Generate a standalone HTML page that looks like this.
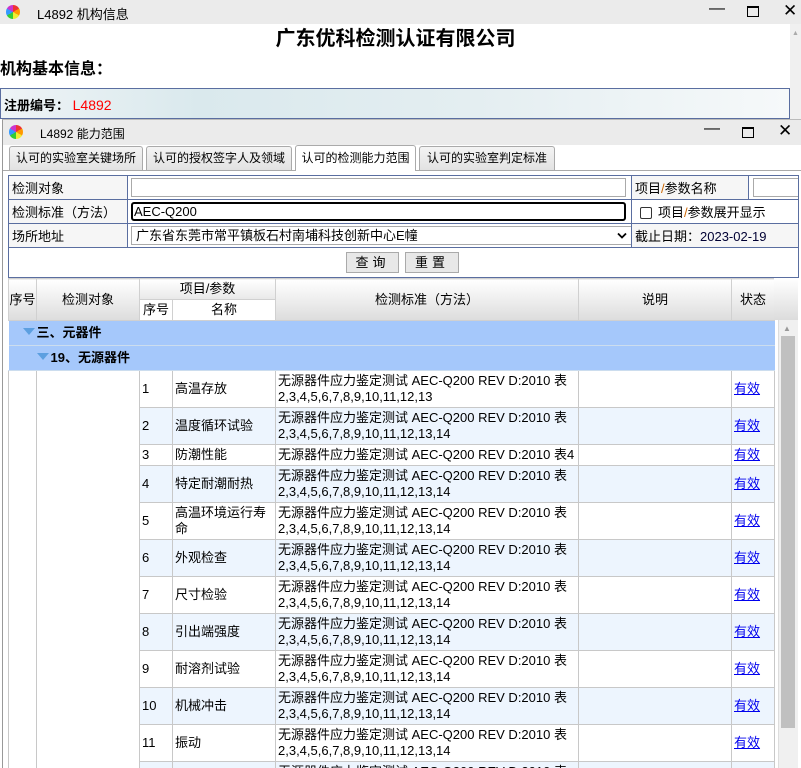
<!DOCTYPE html>
<html><head><meta charset="utf-8"><style>
*{box-sizing:border-box;margin:0;padding:0}
body{width:801px;height:768px;overflow:hidden;background:#fff;font-family:"Liberation Sans","Noto Sans CJK SC",sans-serif;font-size:12px;color:#000;position:relative}
.abs{position:absolute}
.tb{background:#ebebeb}
.logo{width:14px;height:14px;border-radius:50%;background:conic-gradient(#e33 0 60deg,#f90 60deg 120deg,#ee3 120deg 180deg,#3c3 180deg 240deg,#39f 240deg 300deg,#c3c 300deg 360deg)}
table{border-collapse:collapse;table-layout:fixed}
.form td{border:1px solid #5a6ea0;height:24px;padding:0 3px;font-size:13px;white-space:nowrap;overflow:hidden}
.inp{border:1px solid #aaa;height:19px;background:#fff}
.grid td{border:1px solid #c8c8c8;padding:1px 2px;line-height:16px;font-size:13px;vertical-align:middle}
.grid tr.a td.d{background:#edf5fe}
.hd td{background:linear-gradient(#fff,#dcdcdc);text-align:center;border:1px solid #d0d0d0;white-space:nowrap;padding:0!important}
a{color:#00e;text-decoration:underline}
.grp td{background:#a5c8fb;border:none;border-bottom:1px solid #cde;font-weight:bold;height:25px;font-size:13px}
.tri{display:inline-block;width:0;height:0;border-left:6px solid transparent;border-right:6px solid transparent;border-top:7px solid #5c9fe0;margin-right:2px;vertical-align:2px}
.btn{position:absolute;top:252px;height:21px;border:1px solid #aaa;background:#e8e8e8;font-size:13px;text-align:center;line-height:19px;letter-spacing:4px}
</style></head><body>
<div class="abs tb" style="left:0;top:0;width:801px;height:24px"></div>
<div class="abs logo" style="left:6px;top:5px"></div>
<div class="abs" style="left:37px;top:4px;font-size:13px">L4892 机构信息</div>
<div class="abs" style="left:709px;top:0;font-size:16px">—</div>
<div class="abs" style="left:747px;top:6px;width:12px;height:11px;border:1px solid #000;border-top-width:2px"></div>
<div class="abs" style="left:783px;top:1px;font-size:17px">✕</div>
<div class="abs" style="left:790px;top:24px;width:11px;height:96px;background:#f0f0f0"></div>
<div class="abs" style="left:792px;top:30px;font-size:7px;color:#aaa">▲</div>
<div class="abs" style="left:0;top:24px;width:801px;text-align:center;font-size:20px;font-weight:bold;line-height:30px;padding-right:10px">广东优科检测认证有限公司</div>
<div class="abs" style="left:0;top:58px;font-size:16px;font-weight:bold;line-height:24px">机构基本信息：</div>
<div class="abs" style="left:0;top:88px;width:790px;height:31px;border:1px solid #5a6ea0;background:linear-gradient(90deg,#eef4f6,#dae9ed 25%,#e4eef1 60%,#f6f9fa);padding:6px 3px;font-size:13px;font-weight:bold">注册编号： <span style="color:#f00;font-weight:normal;font-size:14px">L4892</span></div>
<div class="abs" style="left:2px;top:119px;width:799px;height:649px;background:#fff;border-left:1px solid #999;border-top:1px solid #bbb"></div>
<div class="abs tb" style="left:3px;top:120px;width:798px;height:25px"></div>
<div class="abs logo" style="left:9px;top:125px"></div>
<div class="abs" style="left:40px;top:125px;font-size:12px">L4892 能力范围</div>
<div class="abs" style="left:704px;top:120px;font-size:16px">—</div>
<div class="abs" style="left:742px;top:127px;width:12px;height:11px;border:1px solid #000;border-top-width:2px"></div>
<div class="abs" style="left:778px;top:121px;font-size:17px">✕</div>
<div class="abs" style="left:3px;top:170px;width:798px;border-top:1px solid #aaa"></div>
<div class="abs" style="left:9px;top:146px;width:134px;height:24px;border:1px solid #aaa;border-bottom:none;border-radius:3px 3px 0 0;background:linear-gradient(#f4f4f4,#e2e2e2);text-align:center;line-height:23px">认可的实验室关键场所</div>
<div class="abs" style="left:146px;top:146px;width:146px;height:24px;border:1px solid #aaa;border-bottom:none;border-radius:3px 3px 0 0;background:linear-gradient(#f4f4f4,#e2e2e2);text-align:center;line-height:23px">认可的授权签字人及领域</div>
<div class="abs" style="left:295px;top:145px;width:121px;height:26px;border:1px solid #aaa;border-bottom:none;border-radius:3px 3px 0 0;background:#fff;text-align:center;line-height:25px">认可的检测能力范围</div>
<div class="abs" style="left:419px;top:146px;width:136px;height:24px;border:1px solid #aaa;border-bottom:none;border-radius:3px 3px 0 0;background:linear-gradient(#f4f4f4,#e2e2e2);text-align:center;line-height:23px">认可的实验室判定标准</div>
<table class="form abs" style="left:8px;top:175px;width:790px">
<colgroup><col style="width:119px"><col style="width:504px"><col style="width:117px"><col style="width:50px"></colgroup>
<tr><td style="background:#f6f6f6">检测对象</td><td><div class="inp" style="width:495px"></div></td><td style="background:#f6f6f6">项目<span style="color:#c60">/</span>参数名称</td><td style="padding:0 0 0 4px"><div class="inp" style="width:60px"></div></td></tr>
<tr><td style="background:#f6f6f6">检测标准（方法）</td><td><div class="inp" style="width:495px;border:2px solid #000;border-radius:3px;font-size:13px;line-height:15px;padding-left:1px">AEC-Q200</div></td><td colspan="2" style="padding-left:8px"><span style="display:inline-block;width:12px;height:12px;border:1px solid #333;border-radius:2px;vertical-align:-2px;margin-right:6px"></span>项目<span style="color:#c60">/</span>参数展开显示</td></tr>
<tr><td style="background:#f6f6f6">场所地址</td><td><div class="inp" style="width:501px;line-height:17px;padding-left:4px;font-size:13px;position:relative">广东省东莞市常平镇板石村南埔科技创新中心E幢<svg style="position:absolute;right:4px;top:5px" width="10" height="7" viewBox="0 0 10 7"><path d="M1 1.5L5 5.5L9 1.5" stroke="#000" stroke-width="1.8" fill="none"/></svg></div></td><td colspan="2" style="background:#f6f6f6">截止日期：<span style="color:#003">2023-02-19</span></td></tr>
<tr><td colspan="4" style="height:30px"></td></tr>
</table>
<div class="btn" style="left:346px;width:53px">查询</div>
<div class="btn" style="left:405px;width:54px">重置</div>
<div class="abs" style="left:8px;top:278px;width:790px;height:490px;overflow:hidden">
<table class="grid" style="width:766px">
<colgroup><col style="width:28px"><col style="width:103px"><col style="width:33px"><col style="width:103px"><col style="width:303px"><col style="width:153px"><col style="width:43px"></colgroup>
<tr class="hd" style="height:21px"><td rowspan="2">序号</td><td rowspan="2">检测对象</td><td colspan="2" style="background:linear-gradient(#fff,#e8e8e8)">项目/参数</td><td rowspan="2">检测标准（方法）</td><td rowspan="2">说明</td><td rowspan="2">状态</td></tr>
<tr class="hd" style="height:21px"><td style="background:#fff">序号</td><td style="background:#fff">名称</td></tr>
<tr class="grp"><td colspan="7" style="padding-left:14px"><span class="tri"></span>三、元器件</td></tr>
<tr class="grp"><td colspan="7" style="padding-left:28px"><span class="tri"></span>19、无源器件</td></tr>
<tr style="height:37px"><td rowspan="12"></td><td rowspan="12"></td><td class="d">1</td><td class="d">高温存放</td><td class="d">无源器件应力鉴定测试 AEC-Q200 REV D:2010 表2,3,4,5,6,7,8,9,10,11,12,13</td><td class="d"></td><td class="d"><a>有效</a></td></tr>
<tr class="a" style="height:37px"><td class="d">2</td><td class="d">温度循环试验</td><td class="d">无源器件应力鉴定测试 AEC-Q200 REV D:2010 表2,3,4,5,6,7,8,9,10,11,12,13,14</td><td class="d"></td><td class="d"><a>有效</a></td></tr>
<tr style="height:21px"><td class="d">3</td><td class="d">防潮性能</td><td class="d" style="white-space:nowrap;overflow:hidden">无源器件应力鉴定测试 AEC-Q200 REV D:2010 表4</td><td class="d"></td><td class="d"><a>有效</a></td></tr>
<tr class="a" style="height:37px"><td class="d">4</td><td class="d">特定耐潮耐热</td><td class="d">无源器件应力鉴定测试 AEC-Q200 REV D:2010 表2,3,4,5,6,7,8,9,10,11,12,13,14</td><td class="d"></td><td class="d"><a>有效</a></td></tr>
<tr style="height:37px"><td class="d">5</td><td class="d">高温环境运行寿命</td><td class="d">无源器件应力鉴定测试 AEC-Q200 REV D:2010 表2,3,4,5,6,7,8,9,10,11,12,13,14</td><td class="d"></td><td class="d"><a>有效</a></td></tr>
<tr class="a" style="height:37px"><td class="d">6</td><td class="d">外观检查</td><td class="d">无源器件应力鉴定测试 AEC-Q200 REV D:2010 表2,3,4,5,6,7,8,9,10,11,12,13,14</td><td class="d"></td><td class="d"><a>有效</a></td></tr>
<tr style="height:37px"><td class="d">7</td><td class="d">尺寸检验</td><td class="d">无源器件应力鉴定测试 AEC-Q200 REV D:2010 表2,3,4,5,6,7,8,9,10,11,12,13,14</td><td class="d"></td><td class="d"><a>有效</a></td></tr>
<tr class="a" style="height:37px"><td class="d">8</td><td class="d">引出端强度</td><td class="d">无源器件应力鉴定测试 AEC-Q200 REV D:2010 表2,3,4,5,6,7,8,9,10,11,12,13,14</td><td class="d"></td><td class="d"><a>有效</a></td></tr>
<tr style="height:37px"><td class="d">9</td><td class="d">耐溶剂试验</td><td class="d">无源器件应力鉴定测试 AEC-Q200 REV D:2010 表2,3,4,5,6,7,8,9,10,11,12,13,14</td><td class="d"></td><td class="d"><a>有效</a></td></tr>
<tr class="a" style="height:37px"><td class="d">10</td><td class="d">机械冲击</td><td class="d">无源器件应力鉴定测试 AEC-Q200 REV D:2010 表2,3,4,5,6,7,8,9,10,11,12,13,14</td><td class="d"></td><td class="d"><a>有效</a></td></tr>
<tr style="height:37px"><td class="d">11</td><td class="d">振动</td><td class="d">无源器件应力鉴定测试 AEC-Q200 REV D:2010 表2,3,4,5,6,7,8,9,10,11,12,13,14</td><td class="d"></td><td class="d"><a>有效</a></td></tr>
<tr class="a" style="height:37px"><td class="d">12</td><td class="d">可焊性</td><td class="d">无源器件应力鉴定测试 AEC-Q200 REV D:2010 表2,3,4,5,6,7,8,9,10,11,12,13,14</td><td class="d"></td><td class="d"><a>有效</a></td></tr>
</table>
</div>
<div class="abs" style="left:774px;top:278px;width:24px;height:42px;background:linear-gradient(#fff,#dcdcdc)"></div>
<div class="abs" style="left:778px;top:320px;width:20px;height:448px;background:#f0f0f0;border-left:1px solid #ddd"></div>
<div class="abs" style="left:783px;top:324px;font-size:8px;color:#999">▲</div>
<div class="abs" style="left:781px;top:336px;width:14px;height:392px;background:#c0c0c0"></div>
</body></html>
